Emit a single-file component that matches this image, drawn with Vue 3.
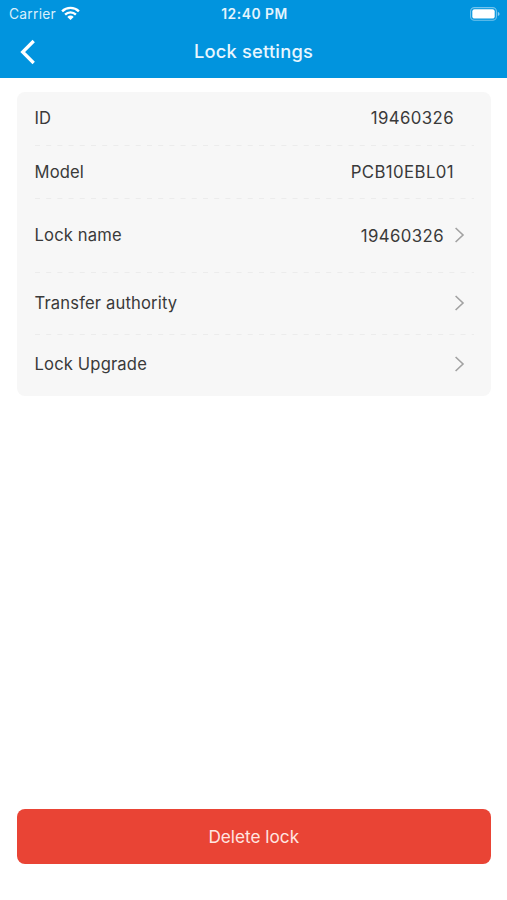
<script setup>
const rows = [
  { key: 'id', label: 'ID', value: '19460326' },
  { key: 'model', label: 'Model', value: 'PCB10EBL01' },
  { key: 'name', label: 'Lock name', value: '19460326', link: true },
  { key: 'transfer', label: 'Transfer authority', link: true },
  { key: 'upgrade', label: 'Lock Upgrade', link: true },
]
</script>

<template>
  <div class="screen">
    <header class="header">
      <div class="status">
        <div class="carrier">
          <span class="carrier-name">Carrier</span>
          <svg class="wifi" viewBox="0 0 19 14" width="19" height="14">
            <g fill="none" stroke="#fff" stroke-width="2.4">
              <path d="M1.1 5.3a12 12 0 0 1 16.8 0" />
              <path d="M4.1 8.6a7.7 7.7 0 0 1 10.8 0" />
            </g>
            <path d="M9.5 14 6.3 10.9a4.6 4.6 0 0 1 6.4 0z" fill="#fff" />
          </svg>
        </div>
        <span class="time">12:40 PM</span>
        <div class="power">
          <svg viewBox="0 0 30 14" width="30" height="14">
            <rect x="0.6" y="0.6" width="25.8" height="12.6" rx="3.8" fill="none" stroke="#fff" stroke-opacity=".45" stroke-width="1.1" />
            <rect x="2.3" y="2.2" width="22.4" height="9.4" rx="2.2" fill="#fff" />
            <path d="M27.8 4.8q1.8.7 1.8 2.1t-1.8 2.1z" fill="#fff" fill-opacity=".55" />
          </svg>
        </div>
      </div>
      <nav class="nav">
        <svg class="back" viewBox="0 0 16 26" width="16" height="26">
          <path d="M13.7 2 2.7 13l11 11" fill="none" stroke="#fff" stroke-width="3.3" />
        </svg>
        <h1 class="title">Lock settings</h1>
      </nav>
    </header>
    <main class="content">
      <section class="card">
        <div v-for="row in rows" :key="row.key" class="row" :class="row.key">
          <span class="label">{{ row.label }}</span>
          <span class="value">{{ row.value }}</span>
          <svg v-if="row.link" class="chevron" viewBox="0 0 10 16" width="10" height="16">
            <path d="m.6 1 7.4 7L.6 15" fill="none" stroke="#a2a2a2" stroke-width="1.6" />
          </svg>
          <svg v-if="row.key !== 'upgrade'" class="divider" width="439" height="1">
            <path d="M0 .5H439" stroke="#ececec" stroke-dasharray="5 6.2" />
          </svg>
        </div>
      </section>
      <button class="delete" type="button">Delete lock</button>
    </main>
  </div>
</template>

<style>
body {
  margin: 0;
  background: #fff;
}
</style>

<style scoped>
.screen {
  display: flex;
  flex-direction: column;
  height: 900px;
  font-family: Inter, "Liberation Sans", sans-serif;
  color: #3a3a3a;
  background: #fff;
}
.header {
  height: 78px;
  flex: none;
  background: #0194de;
  color: #fff;
}
.status {
  display: grid;
  grid-template-columns: 1fr auto 1fr;
  align-items: center;
  height: 27px;
  padding: 0 7px 0 9px;
}
.carrier {
  display: flex;
  align-items: center;
  gap: 5.5px;
  font-size: 13.8px;
  color: #d9effb;
}
.carrier-name {
  letter-spacing: 0.25px;
}
.wifi {
  margin-top: -2px;
}
.time {
  font-size: 13.8px;
  font-weight: 600;
  letter-spacing: 0.55px;
  color: #e4f4fd;
}
.power {
  display: flex;
  justify-content: flex-end;
}
.nav {
  display: grid;
  grid-template-columns: 1fr auto 1fr;
  align-items: center;
  height: 49px;
  padding: 0 20px;
}
.title {
  margin: 0;
  padding-bottom: 2px;
  font-size: 18.3px;
  font-weight: 500;
  letter-spacing: 0.2px;
  color: #e8f6fe;
}
.content {
  display: flex;
  flex-direction: column;
  justify-content: space-between;
  flex: 1;
  padding: 14px 16.5px 36px 17px;
}
.card {
  padding: 0 17px 0 17.5px;
  border-radius: 8px;
  background: #f7f7f7;
}
.row {
  display: grid;
  grid-template-columns: auto 1fr auto;
  grid-template-rows: 1fr 1px;
  align-items: center;
  height: 53px;
  font-size: 16.6px;
  letter-spacing: 0.15px;
}
.id {
  height: 54px;
}
.name {
  height: 74px;
}
.transfer {
  height: 62px;
}
.upgrade {
  height: 61px;
}
.label {
  padding-bottom: 1px;
}
.name .label {
  padding-bottom: 2px;
}
.transfer .label {
  padding-bottom: 2px;
}
.upgrade .label {
  padding-bottom: 3px;
}
.value {
  padding: 0 19.5px 1px 0;
  font-size: 16.8px;
  letter-spacing: 0.4px;
  text-align: right;
}
.name .value {
  padding: 0 10.5px 0 0;
}
.chevron {
  margin: 0 9px 2px 0;
}
.divider {
  grid-column: 1 / -1;
  grid-row: 2;
  width: 100%;
}
.delete {
  height: 55px;
  padding: 0;
  border: 0;
  border-radius: 8px;
  background: #e94435;
  color: #ffe6e1;
  font: 400 17.2px Inter, "Liberation Sans", sans-serif;
}
</style>
